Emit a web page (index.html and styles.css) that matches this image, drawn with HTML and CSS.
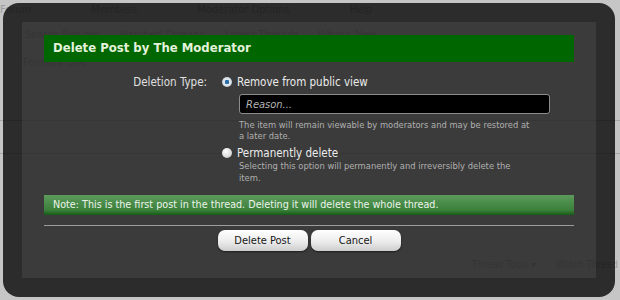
FILE: index.html
```html
<!DOCTYPE html>
<html lang="en">
<head>
    <meta charset="UTF-8">
    <title>Delete Post</title>
    <link rel="stylesheet" href="styles.css">
</head>
<body>
    <div class="page">
        <div class="topnav">
            <span>Forum</span><span>Members</span><span>Moderator Options</span><span>Help</span>
        </div>
        <div class="tabs">
            <span>Search Forums</span><span>Watched Threads</span><span>Latest Threads</span><span>What's New</span>
        </div>
        <div class="crumbs">
            <span>Formula One</span>
        </div>
        <div class="rule"></div>
        <div class="rule"></div>
        <div class="thread-tools">
            <span>Thread Tools &#9662;</span><span>Watch Thread</span>
        </div>
    </div>

    <div class="overlay">
        <div class="dialog">
            <h2 class="dialog-title">Delete Post by The Moderator</h2>

            <div class="form-row">
                <div class="form-label">Deletion Type:</div>
                <div class="form-field">
                    <label class="option">
                        <input type="radio" name="type" checked>
                        <span>Remove from public view</span>
                    </label>
                    <input type="text" class="reason" placeholder="Reason...">
                    <p class="hint">The item will remain viewable by moderators and may be restored at a later date.</p>

                    <label class="option option-second">
                        <input type="radio" name="type">
                        <span>Permanently delete</span>
                    </label>
                    <p class="hint hint-second">Selecting this option will permanently and irreversibly delete the item.</p>
                </div>
            </div>

            <div class="note">Note: This is the first post in the thread. Deleting it will delete the whole thread.</div>

            <div class="buttons">
                <button class="btn">Delete Post</button>
                <button class="btn">Cancel</button>
            </div>
        </div>
    </div>
</body>
</html>
```

FILE: styles.css
```css
body {
    margin: 0;
    background: #c6c6c6;
    font-family: "DejaVu Sans Condensed", "DejaVu Sans", sans-serif;
    width: 620px;
    height: 300px;
    overflow: hidden;
    position: relative;
}

/* the forum page behind the overlay */
.page {
    color: #9c9c9c;
    font-size: 11px;
}
.topnav {
    display: flex;
    gap: 60px;
    padding: 3px 0 0 0;
    height: 18px;
}
.tabs {
    display: flex;
    gap: 20px;
    padding: 7px 0 0 25px;
    height: 28px;
}
.crumbs {
    display: flex;
    gap: 25px;
    padding: 0 0 0 23px;
    height: 32px;
}
.rule {
    height: 32px;
    border-bottom: 1px solid #a8a8a8;
}
.thread-tools {
    display: flex;
    gap: 20px;
    padding: 105px 0 0 472px;
    font-size: 10px;
    white-space: nowrap;
}

/* overlay frame */
.overlay {
    position: absolute;
    top: 3px;
    left: 3px;
    width: 574px;
    height: 256px;
    padding: 19px;
    border-radius: 16px;
    background: rgba(10, 10, 10, 0.82);
}
.dialog {
    height: 100%;
    box-sizing: border-box;
    padding: 13px 22px 0 22px;
    background: rgba(255, 255, 255, 0.075);
    color: #e6e6e6;
}
.dialog-title {
    margin: 0;
    height: 27px;
    line-height: 27px;
    padding-left: 9px;
    background: #006600;
    color: #e4f2dc;
    font-family: "DejaVu Sans", sans-serif;
    font-size: 11.7px;
    font-weight: bold;
}

.form-row {
    display: grid;
    grid-template-columns: 163px 1fr;
    column-gap: 15px;
    margin-top: 13px;
}
.form-label {
    text-align: right;
    font-size: 11.5px;
    line-height: 14px;
    color: #e0e0e0;
}
.option {
    display: flex;
    align-items: center;
    gap: 5px;
    font-size: 11.5px;
    line-height: 14px;
    color: #ececec;
}
.option input {
    appearance: none;
    margin: 0;
    width: 10px;
    height: 10px;
    border-radius: 50%;
    background: radial-gradient(circle at 40% 35%, #ffffff 0%, #d4d4d4 70%, #9a9a9a 100%);
}
.option input:checked {
    background: radial-gradient(circle, #2c6fa8 0 2px, #e8eef4 2.6px, #c9d2da 70%, #8aa0b4 100%);
}
.reason {
    display: block;
    box-sizing: border-box;
    margin: 5px 0 0 17px;
    width: 311px;
    height: 20px;
    padding: 0 6px;
    background: #000;
    border: 1px solid #8c8c8c;
    border-radius: 3px;
    font-family: inherit;
    font-size: 11px;
    color: #fff;
}
.reason::placeholder {
    color: #b4b4b4;
    font-style: italic;
}
.hint {
    margin: 5px 0 0 17px;
    width: 292px;
    font-size: 9.3px;
    line-height: 11px;
    color: #b0b0b0;
}
.option-second {
    margin-top: 5px;
}
.hint-second {
    margin-top: 0;
    line-height: 12px;
}

.note {
    margin-top: 11px;
    height: 20px;
    line-height: 19px;
    padding-left: 9px;
    background: linear-gradient(#5c9a5c, #3b803b 75%, #165c16);
    color: #ecf4ea;
    font-size: 10.7px;
}

.buttons {
    display: flex;
    justify-content: center;
    gap: 3px;
    margin-top: 10px;
    padding-top: 4px;
    border-top: 1px solid #9c9c9c;
}
.btn {
    width: 90px;
    height: 21px;
    border: none;
    border-radius: 7px;
    background: linear-gradient(#ffffff, #ececec 55%, #cdcdcd);
    box-shadow: 0 1px 2px rgba(0, 0, 0, 0.5);
    font-family: inherit;
    font-size: 11px;
    color: #161616;
}
```
